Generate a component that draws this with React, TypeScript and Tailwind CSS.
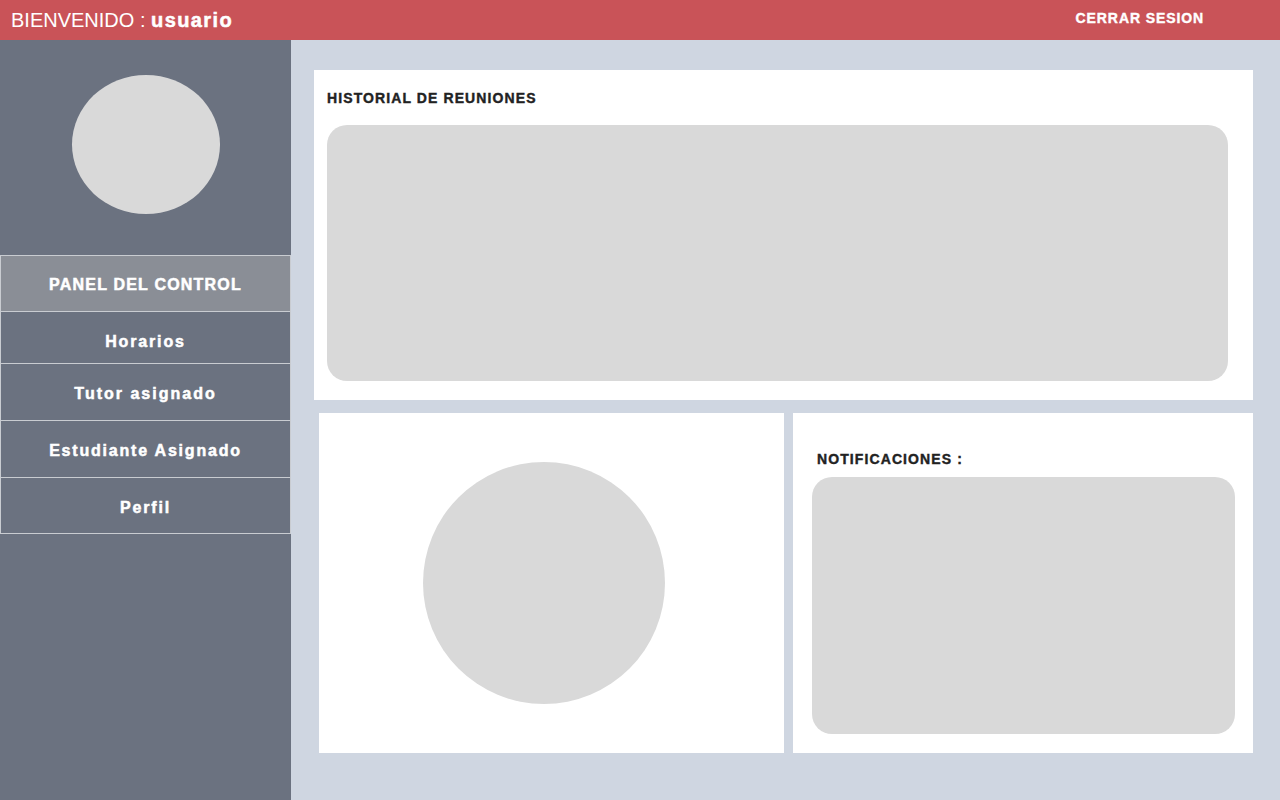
const menu = [
  { label: 'PANEL DEL CONTROL', box: 'h-[57px] pt-[3px] tracking-[1.2px]', active: true },
  { label: 'Horarios', box: 'h-[52px] pt-[8px] tracking-[1.85px]', active: false },
  { label: 'Tutor asignado', box: 'h-[57px] pt-[4px] tracking-[2px]', active: false },
  { label: 'Estudiante Asignado', box: 'h-[57px] pt-[4px] tracking-[1.8px]', active: false },
  { label: 'Perfil', box: 'h-[56px] pt-[4px] tracking-[1.8px]', active: false },
];

export default function App() {
  return (
    <div className="flex h-[800px] w-[1280px] flex-col overflow-hidden font-['Liberation_Sans',Arial,sans-serif]">
      {/* Top bar */}
      <header className="flex h-10 shrink-0 items-center bg-[#c95358] text-white">
        <div className="pl-[11px] text-[20px] leading-none">
          BIENVENIDO : <span className="font-bold tracking-[1.4px] [-webkit-text-stroke:0.5px]">usuario</span>
        </div>
        <button className="ml-auto mr-[76px] -mt-1 text-[14px] font-bold tracking-[0.9px] [-webkit-text-stroke:0.4px]">
          CERRAR SESION
        </button>
      </header>

      <div className="flex flex-1">
        {/* Sidebar */}
        <aside className="flex w-[291px] shrink-0 flex-col bg-[#6b7280]">
          <div className="mt-[35px] ml-[72px] h-[139px] w-[148px] rounded-[50%] bg-[#d9d9d9]" />
          <nav className="mt-[41px] flex flex-col">
            {menu.map((item, i) => (
              <a
                key={item.label}
                className={`flex ${item.box} items-center justify-center border-x border-b border-[#c9ccd1] text-[16px] font-bold text-white [-webkit-text-stroke:0.5px] ${
                  i === 0 ? 'border-t' : ''
                } ${item.active ? 'bg-[#8a8e96]' : ''}`}
              >
                {item.label}
              </a>
            ))}
          </nav>
        </aside>

        {/* Main */}
        <main className="flex flex-1 flex-col bg-[#cfd6e1] pt-[30px]">
          <section className="ml-[23px] h-[330px] w-[939px] bg-white px-[13px] pt-[18px]">
            <h2 className="text-[14px] font-bold tracking-[1.1px] text-[#222] [-webkit-text-stroke:0.4px]">
              HISTORIAL DE REUNIONES
            </h2>
            <div className="mt-[16px] h-[256px] w-[901px] rounded-[20px] bg-[#d9d9d9]" />
          </section>

          <div className="mt-[13px] ml-[28px] flex gap-[9px]">
            <section className="flex h-[340px] w-[465px] items-center justify-center bg-white pr-[16px]">
              <div className="h-[242px] w-[242px] rounded-full bg-[#d9d9d9]" />
            </section>
            <section className="h-[340px] w-[460px] bg-white pt-[36px] pl-[19px]">
              <h2 className="pl-[5px] text-[14px] font-bold tracking-[1.1px] text-[#222] [-webkit-text-stroke:0.4px]">
                NOTIFICACIONES :
              </h2>
              <div className="mt-[7px] h-[257px] w-[423px] rounded-[20px] bg-[#d9d9d9]" />
            </section>
          </div>
        </main>
      </div>
    </div>
  );
}
